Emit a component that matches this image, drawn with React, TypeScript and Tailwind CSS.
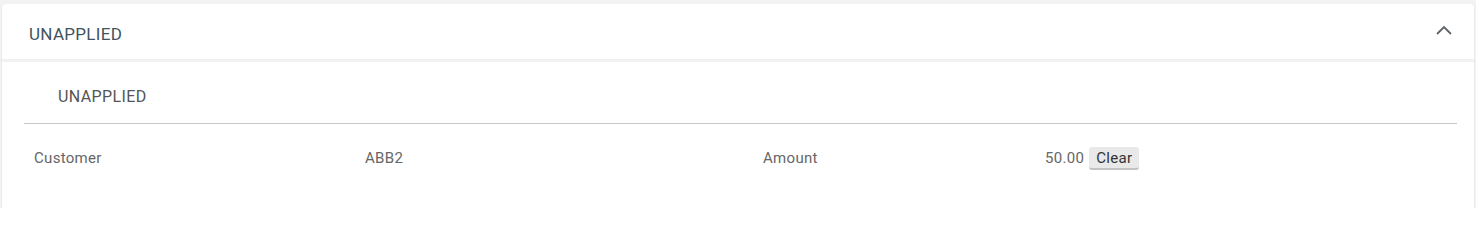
export default function App() {
  return (
    <div className="h-[208px] overflow-hidden bg-[#f3f3f3] pt-[4px] px-[2px] font-['Roboto',sans-serif]">
      <div className="bg-white rounded-[4px] shadow-[0_1px_2px_rgba(0,0,0,0.12)] min-h-[210px]">
        {/* Panel header */}
        <div className="h-[58px] flex items-center justify-between pl-[27px] pr-[21px] pt-[6px] border-b-[3px] border-[#f1f1f1]">
          <span className="text-[17px] text-[#3f5360] tracking-[0.3px]">UNAPPLIED</span>
          <svg width="18" height="12" viewBox="0 0 18 12" className="mb-[10px]">
            <path d="M2 10 L9 3 L16 10" fill="none" stroke="#5f6368" strokeWidth="1.8" />
          </svg>
        </div>

        <div className="pl-[22px] pr-[17px]">
          <div className="h-[62px] flex items-center pl-[34px] pt-[9px] border-b border-[#c6c6c6]">
            <span className="text-[16px] text-[#555] tracking-[0.4px]">UNAPPLIED</span>
          </div>
          <div className="flex items-center h-[68px] pl-[10px] text-[15px] text-[#666] tracking-[0.3px]">
            <span className="w-[331px]">Customer</span>
            <span className="w-[398px]">ABB2</span>
            <span className="w-[282px]">Amount</span>
            <span className="flex items-center gap-[5px]">
              <span>50.00</span>
              <button className="h-[23px] px-[7px] rounded-[3px] bg-[#e9e9e9] border-b-2 border-[#c3c3c3] text-[15px] text-[#333]">
                Clear
              </button>
            </span>
          </div>
        </div>
      </div>
    </div>
  );
}
